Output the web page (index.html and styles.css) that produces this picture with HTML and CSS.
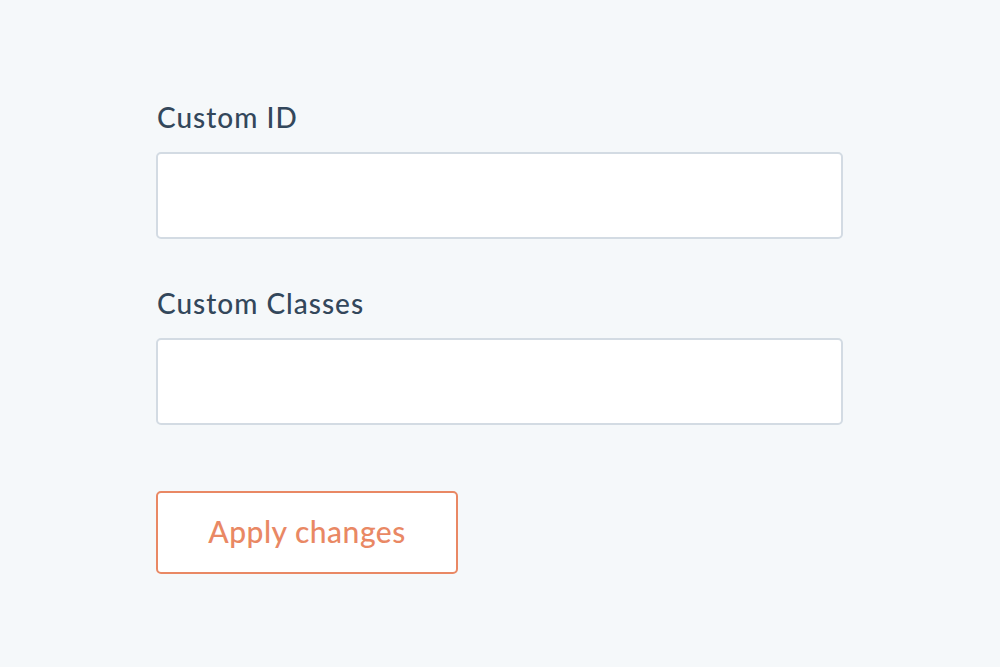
FILE: index.html
```html
<!DOCTYPE html>
<html>
<head>
<meta charset="utf-8">
<link rel="stylesheet" href="styles.css">
</head>
<body>
<main class="form">
  <div class="field">
    <label class="label">Custom ID</label>
    <div class="input"></div>
  </div>
  <div class="field">
    <label class="label">Custom Classes</label>
    <div class="input"></div>
  </div>
  <button class="btn">Apply changes</button>
</main>
</body>
</html>
```
FILE: styles.css
```css
html, body {
  margin: 0;
  padding: 0;
  background: #f5f8fa;
}
body {
  width: 1000px;
  height: 667px;
  overflow: hidden;
  font-family: Lato, "Noto Sans", sans-serif;
}
.form {
  display: flex;
  flex-direction: column;
  align-items: flex-start;
  padding: 98px 0 0 156px;
}
.field {
  display: flex;
  flex-direction: column;
  margin-bottom: 45px;
}
.field + .field {
  margin-bottom: 66px;
}
.label {
  font-size: 28px;
  font-weight: 500;
  line-height: 38px;
  letter-spacing: 1px;
  color: #33475b;
  margin-bottom: 16px;
  padding-left: 1px;
}
.input {
  box-sizing: border-box;
  width: 687px;
  height: 87px;
  background: #fff;
  border: 2px solid #d3dbe3;
  border-radius: 5px;
}
.btn {
  box-sizing: border-box;
  width: 302px;
  height: 83px;
  background: #fff;
  border: 2px solid #e98864;
  border-radius: 5px;
  color: #e98864;
  font-family: Lato, "Noto Sans", sans-serif;
  font-size: 30px;
  font-weight: 500;
  letter-spacing: 0.5px;
  padding: 0;
  padding-bottom: 4px;
}
```
